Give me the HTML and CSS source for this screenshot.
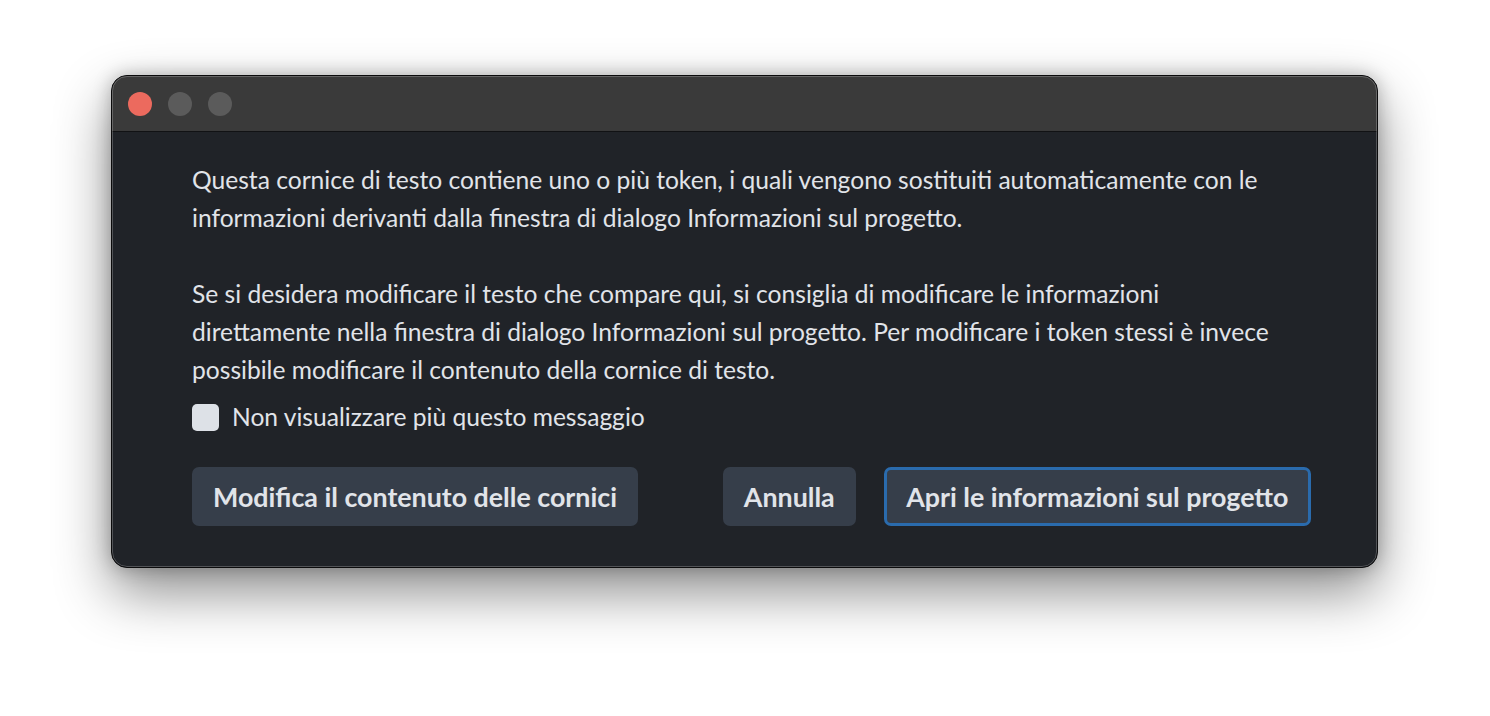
FILE: index.html
```html
<!DOCTYPE html>
<html lang="it">
<head>
<meta charset="utf-8">
<title>Token</title>
<link rel="stylesheet" href="styles.css">
</head>
<body>
<div class="window">
  <div class="titlebar">
    <span class="light red"></span>
    <span class="light gray"></span>
    <span class="light gray"></span>
  </div>
  <div class="content">
    <p class="para">Questa cornice di testo contiene uno o più token, i quali vengono sostituiti automaticamente con le informazioni derivanti dalla finestra di dialogo Informazioni sul progetto.</p>
    <p class="para">Se si desidera modificare il testo che compare qui, si consiglia di modificare le informazioni direttamente nella finestra di dialogo Informazioni sul progetto. Per modificare i token stessi è invece possibile modificare il contenuto della cornice di testo.</p>
    <label class="check-row"><span class="checkbox"></span><span class="check-label">Non visualizzare più questo messaggio</span></label>
    <div class="buttons">
      <button class="btn">Modifica il contenuto delle cornici</button>
      <div class="right-group">
        <button class="btn">Annulla</button>
        <button class="btn primary">Apri le informazioni sul progetto</button>
      </div>
    </div>
  </div>
</div>
</body>
</html>
```
FILE: styles.css
```css
html, body {
  margin: 0;
  padding: 0;
  background: #ffffff;
}
body {
  padding-top: 75px;
  padding-left: 111px;
  height: 716px;
  box-sizing: border-box;
  overflow: hidden;
  font-family: "Lato", "Noto Sans", sans-serif;
}
.window {
  position: relative;
  width: 1267px;
  height: 493px;
  box-sizing: border-box;
  border: 1px solid #0b0b0c;
  border-radius: 16px;
  overflow: hidden;
  background: #202328;
  box-shadow: 0 24px 55px rgba(0, 0, 0, 0.45), 0 0 18px rgba(0, 0, 0, 0.25);
  display: flex;
  flex-direction: column;
}
.window::after {
  content: "";
  position: absolute;
  inset: 0;
  border: 1px solid rgba(255, 255, 255, 0.22);
  border-radius: 15px;
  pointer-events: none;
}
.titlebar {
  flex: none;
  background: #3a3a3a;
  border-bottom: 1px solid #111214;
  display: flex;
  align-items: center;
  gap: 16px;
  padding-left: 16px;
  box-sizing: border-box;
  height: 56px;
}
.light {
  width: 24px;
  height: 24px;
  border-radius: 50%;
  display: block;
}
.light.red { background: #ec6a5e; }
.light.gray { background: #5b5b5b; }
.content {
  padding: 29px 66px 40px 80px;
  color: #e1e4e9;
  font-size: 24.6px;
  line-height: 38px;
  display: flex;
  flex-direction: column;
}
.para {
  margin: 0 0 38px 0;
  padding-right: 24px;
}
.para:nth-of-type(2) {
  margin-bottom: 14px;
}
.check-row {
  display: flex;
  align-items: center;
  gap: 13px;
  height: 28px;
}
.checkbox {
  width: 27px;
  height: 27px;
  border-radius: 5px;
  background: #dde1e7;
  display: block;
}
.buttons {
  margin-top: 36px;
  display: flex;
  justify-content: space-between;
}
.right-group {
  display: flex;
  gap: 28px;
}
.btn {
  font-family: inherit;
  font-weight: 700;
  font-size: 26.8px;
  color: #e1e4e9;
  background: #363e4a;
  border: 3px solid transparent;
  border-radius: 7px;
  height: 59px;
  padding: 0 18px;
}
.btn.primary {
  border-color: #2a6bad;
  padding: 0 19.5px;
}
```
